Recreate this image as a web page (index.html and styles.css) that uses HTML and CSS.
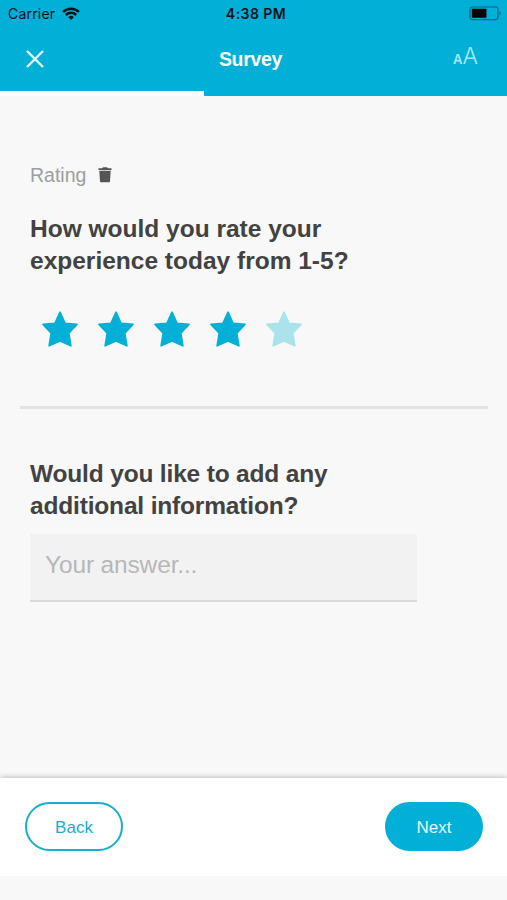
FILE: index.html
```html
<!DOCTYPE html>
<html lang="en">
<head>
  <meta charset="UTF-8">
  <meta name="viewport" content="width=device-width, initial-scale=1.0">
  <title>Survey</title>
  <link rel="stylesheet" href="styles.css">
</head>
<body>
  <header class="header">
    <div class="status-bar">
      <div class="carrier">
        <span>Carrier</span>
        <svg class="wifi" width="18" height="13" viewBox="0 0 18 13" fill="none" stroke="#06141a" stroke-width="2.5">
          <path d="M1.1 4.9a11.2 11.2 0 0 1 15.8 0"/>
          <path d="M3.8 8a7.4 7.4 0 0 1 10.4 0"/>
          <path d="M9 13L6.2 10.2a4 4 0 0 1 5.6 0z" fill="#06141a" stroke="none"/>
        </svg>
      </div>
      <span class="time">4:38 PM</span>
      <svg class="battery" width="33" height="15" viewBox="0 0 33 15">
        <rect x="1" y="1" width="28" height="12.6" rx="2.5" fill="none" stroke="#06677f" stroke-width="1.2"/>
        <rect x="2.8" y="2.8" width="14.7" height="9" rx=".8" fill="#000"/>
        <path d="M30.5 5.2c1.6.6 1.6 3.6 0 4.2z" fill="#06677f"/>
      </svg>
    </div>
    <div class="nav-bar">
      <button class="close" aria-label="Close">
        <svg width="18" height="18" viewBox="0 0 18 18" stroke="#e6fbff" stroke-width="2.4">
          <path d="M1 1l16 16M17 1L1 17"/>
        </svg>
      </button>
      <h1 class="title">Survey</h1>
      <button class="text-size"><span class="small-a">A</span><span class="big-a">A</span></button>
    </div>
    <div class="progress"></div>
  </header>

  <main class="content">
    <section class="question">
      <div class="label">
        <span>Rating</span>
        <svg width="14" height="16" viewBox="0 0 14 16" fill="#555">
          <path d="M.5 1.2h3.6L5 .3h4l.9.9h3.6v1.7H.5z"/>
          <path d="M1.3 3.7h11.4l-.7 10.5c0 .6-.5 1.1-1.1 1.1H3.1c-.6 0-1.1-.5-1.1-1.1z"/>
        </svg>
      </div>
      <h2>How would you rate your<br>experience today from 1-5?</h2>
      <div class="stars">
        <svg class="star" viewBox="0 0 36 36"><path d="M18 1.2L23 12.2 35 13.4 26.8 22.2 28.9 34.8 18 29.9 7.1 34.8 9.2 22.2 1 13.4 13 12.2z"/></svg>
        <svg class="star" viewBox="0 0 36 36"><path d="M18 1.2L23 12.2 35 13.4 26.8 22.2 28.9 34.8 18 29.9 7.1 34.8 9.2 22.2 1 13.4 13 12.2z"/></svg>
        <svg class="star" viewBox="0 0 36 36"><path d="M18 1.2L23 12.2 35 13.4 26.8 22.2 28.9 34.8 18 29.9 7.1 34.8 9.2 22.2 1 13.4 13 12.2z"/></svg>
        <svg class="star" viewBox="0 0 36 36"><path d="M18 1.2L23 12.2 35 13.4 26.8 22.2 28.9 34.8 18 29.9 7.1 34.8 9.2 22.2 1 13.4 13 12.2z"/></svg>
        <svg class="star empty" viewBox="0 0 36 36"><path d="M18 1.2L23 12.2 35 13.4 26.8 22.2 28.9 34.8 18 29.9 7.1 34.8 9.2 22.2 1 13.4 13 12.2z"/></svg>
      </div>
    </section>
    <hr>
    <section class="question">
      <h2 class="tight">Would you like to add any<br>additional information?</h2>
      <input class="answer" type="text" placeholder="Your answer...">
    </section>
  </main>

  <footer class="footer">
    <button class="btn">Back</button>
    <button class="btn primary">Next</button>
  </footer>
</body>
</html>
```
FILE: styles.css
```css
* { box-sizing: border-box; }
body {
  margin: 0;
  height: 900px;
  padding-bottom: 24px;
  display: flex;
  flex-direction: column;
  overflow: hidden;
  background: #f8f8f8;
  color: #424242;
  font-family: "Liberation Sans", Arial, sans-serif;
}
button { border: 0; padding: 0; background: none; font-family: inherit; cursor: pointer; }
svg { display: block; }

.header { height: 96px; background: #02afd7; display: flex; flex-direction: column; }
.status-bar {
  height: 27px;
  padding: 0 5px 0 8px;
  display: grid;
  grid-template-columns: 1fr auto 1fr;
  align-items: center;
  color: #06141a;
  font-family: Inter, sans-serif;
  font-size: 14px;
}
.carrier { display: flex; align-items: center; gap: 7px; letter-spacing: .2px; }
.time { padding-left: 2px; font-weight: 600; letter-spacing: .45px; }
.battery { justify-self: end; }
.nav-bar {
  height: 64px;
  padding: 0 29px 0 26px;
  display: grid;
  grid-template-columns: 1fr auto 1fr;
  align-items: center;
}
.close { justify-self: start; }
.title { margin: 0; padding-right: 3px; color: #fff; font-size: 19.5px; line-height: 22px; letter-spacing: -.3px; }
.text-size { justify-self: end; color: #a6e8f5; font-family: Inter, sans-serif; line-height: 26px; padding-bottom: 4px; }
.small-a { font-size: 13px; font-weight: 600; }
.big-a { font-size: 23px; font-weight: 300; }
.progress { width: 203.5px; height: 5px; background: #fff; }

.content { flex: 1; padding: 68px 19px 0 20px; }
.question { padding: 0 10px; }
.label { display: flex; align-items: center; gap: 12px; height: 22px; color: #9b9fa0; font-size: 19.5px; }
h2 { margin: 0; font-size: 24.5px; line-height: 32px; }
h2.tight { letter-spacing: -.17px; }
.label + h2 { margin-top: 27px; }
.stars { display: flex; gap: 20.2px; padding: 34px 11.6px 0; }
.star { width: 36px; height: 36px; fill: #02afd7; stroke: #02afd7; stroke-width: 1.6; stroke-linejoin: round; }
.star.empty { fill: #abe3ec; stroke: #abe3ec; }
hr { height: 3px; margin: 59px 0 49px; border: 0; background: #e2e2e2; }
.answer {
  display: block;
  width: 387px;
  height: 68px;
  margin-top: 12px;
  padding: 0 15px 4px;
  border: 0;
  border-bottom: 2px solid #dadada;
  background: #f2f2f2;
  font-family: inherit;
  font-size: 24.5px;
  letter-spacing: -.15px;
}
.answer::placeholder { color: #b7b7b7; }

.footer {
  height: 98px;
  padding: 0 24px 0 25px;
  display: flex;
  align-items: center;
  justify-content: space-between;
  background: #fff;
  box-shadow: 0 -1px 5px rgba(0, 0, 0, .24);
  clip-path: inset(-10px 0 0 0);
}
.btn { width: 98px; height: 49px; margin-bottom: 1px; border: 2.5px solid #1badd0; border-radius: 25px; color: #1badd0; font-size: 17px; padding-top: 3px; }
.btn.primary { background: #02afd7; border-color: #02afd7; color: #e6fbff; }
```
